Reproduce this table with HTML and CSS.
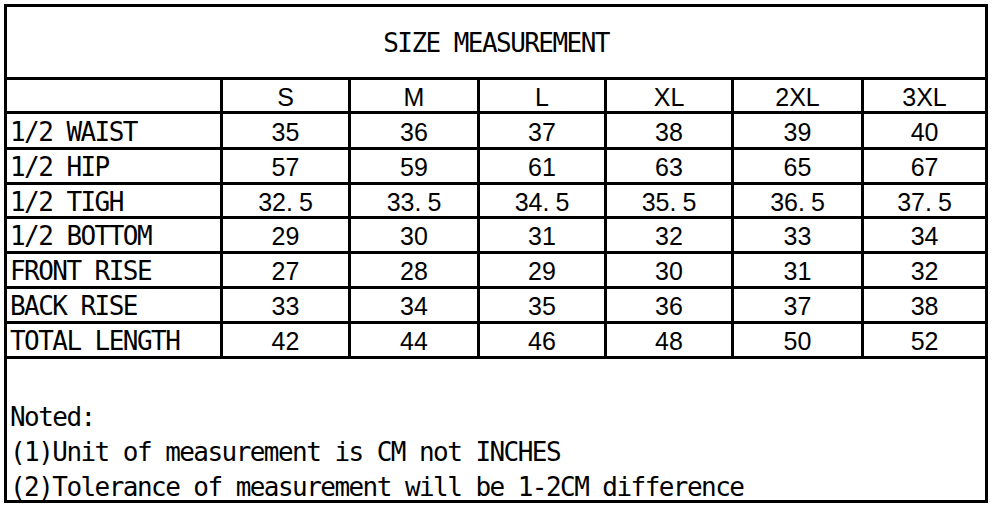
FILE: index.html
```html
<!DOCTYPE html>
<html lang="en">
  <head>
    <meta charset="UTF-8" />
    <meta name="viewport" content="width=device-width, initial-scale=1.0" />
    <title>Size Measurement</title>
    <link rel="stylesheet" href="styles.css">
  </head>
  <body>
    <table class="size-chart">
      <colgroup>
        <col class="col-label">
        <col class="col-s">
        <col class="col-m">
        <col class="col-l">
        <col class="col-xl">
        <col class="col-2xl">
        <col class="col-3xl">
      </colgroup>
      <tbody>
        <tr class="title-row">
          <td colspan="7" class="title">SIZE MEASUREMENT</td>
        </tr>
        <tr class="head-row">
          <td></td>
          <td>S</td>
          <td>M</td>
          <td>L</td>
          <td>XL</td>
          <td>2XL</td>
          <td>3XL</td>
        </tr>
        <tr class="row-1">
          <td class="label">1/2 WAIST</td>
          <td>35</td><td>36</td><td>37</td><td>38</td><td>39</td><td>40</td>
        </tr>
        <tr class="row-2">
          <td class="label">1/2 HIP</td>
          <td>57</td><td>59</td><td>61</td><td>63</td><td>65</td><td>67</td>
        </tr>
        <tr class="row-3">
          <td class="label">1/2 TIGH</td>
          <td>32<span class="dot">.</span>5</td>
          <td>33<span class="dot">.</span>5</td>
          <td>34<span class="dot">.</span>5</td>
          <td>35<span class="dot">.</span>5</td>
          <td>36<span class="dot">.</span>5</td>
          <td>37<span class="dot">.</span>5</td>
        </tr>
        <tr class="row-4">
          <td class="label">1/2 BOTTOM</td>
          <td>29</td><td>30</td><td>31</td><td>32</td><td>33</td><td>34</td>
        </tr>
        <tr class="row-5">
          <td class="label">FRONT RISE</td>
          <td>27</td><td>28</td><td>29</td><td>30</td><td>31</td><td>32</td>
        </tr>
        <tr class="row-6">
          <td class="label">BACK RISE</td>
          <td>33</td><td>34</td><td>35</td><td>36</td><td>37</td><td>38</td>
        </tr>
        <tr class="row-7">
          <td class="label">TOTAL LENGTH</td>
          <td>42</td><td>44</td><td>46</td><td>48</td><td>50</td><td>52</td>
        </tr>
        <tr class="notes-row">
          <td colspan="7" class="notes">
            <div class="notes-inner">
              <p>Noted:</p>
              <p>(1)Unit of measurement is CM not INCHES</p>
              <p>(2)Tolerance of measurement will be 1-2CM difference</p>
            </div>
          </td>
        </tr>
      </tbody>
    </table>
  </body>
</html>
```

FILE: styles.css
```css
/* General */
body {
  margin: 4px;
  background-color: #fff;
  color: #000;
}

/* Table grid: black background shows through the cell spacing as lines */
.size-chart {
  table-layout: fixed;
  border-collapse: separate;
  border-spacing: 3px;
  background-color: #000;
  width: 984px;
}

.size-chart td {
  box-sizing: border-box;
  background-color: #fff;
  padding: 2px 0 0;
  text-align: center;
  vertical-align: middle;
  font-family: "Liberation Sans", Arial, sans-serif;
  font-size: 25px;
  line-height: 26px;
  white-space: nowrap;
}

.col-label { width: 213px; }
.col-s { width: 125px; }
.col-m { width: 126px; }
.col-l { width: 124px; }
.col-xl { width: 124px; }
.col-2xl { width: 127px; }
.col-3xl { width: 121px; }

/* Row heights */
.title-row td { height: 70px; }
.head-row td { height: 31px; }
.row-1 td { height: 33px; }
.row-2 td,
.row-4 td,
.row-5 td,
.row-6 td,
.row-7 td { height: 32px; }
.row-3 td { height: 31px; }
.notes-row td { height: 141px; }

/* Monospaced text (title, row labels, notes) */
.size-chart .title,
.size-chart .label,
.size-chart .notes {
  font-family: "DejaVu Sans Mono", monospace;
  font-size: 26px;
  letter-spacing: -1.55px;
}

.size-chart .label {
  text-align: left;
  padding-left: 3px;
}

.dot {
  margin-right: 6px;
}

/* Notes */
.size-chart .notes {
  text-align: left;
  vertical-align: top;
  padding: 0;
}

.notes-inner {
  padding: 41px 0 0 3px;
  display: flex;
  flex-direction: column;
}

.notes-inner p {
  margin: 0;
  height: 35px;
  line-height: 35px;
}

.notes-inner p:last-child {
  height: 30px;
}
```
